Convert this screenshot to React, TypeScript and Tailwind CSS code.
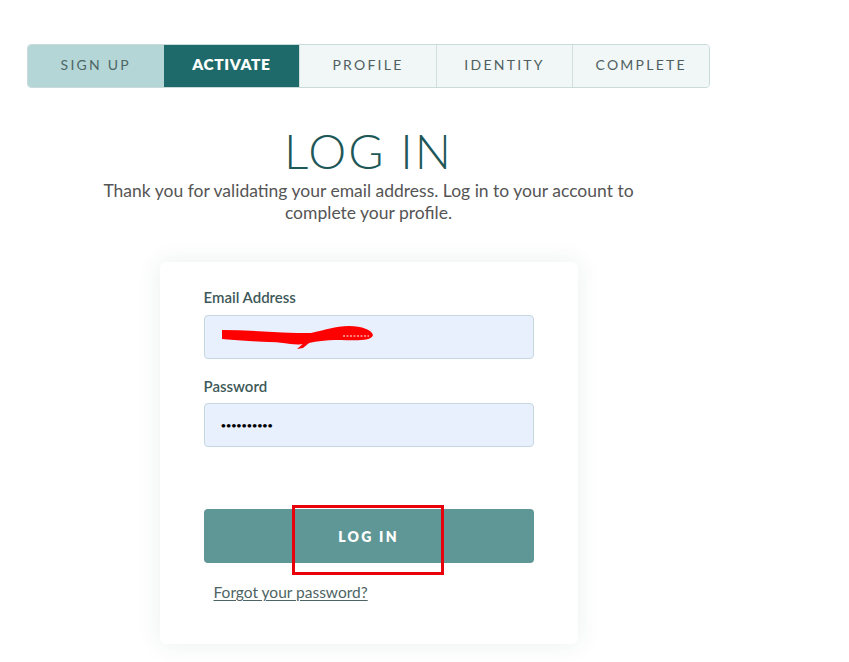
const steps = [
  { label: 'SIGN UP', state: 'done' },
  { label: 'ACTIVATE', state: 'active' },
  { label: 'PROFILE', state: 'todo' },
  { label: 'IDENTITY', state: 'todo' },
  { label: 'COMPLETE', state: 'todo' },
];

const App = () => {
  return (
    <div className="min-h-[662px] bg-white font-['Lato','Liberation_Sans',sans-serif]">
      <div className="ml-[27px] flex w-[683px] flex-col items-center pt-[44px]">
        {/* Stepper */}
        <div className="flex h-[44px] w-full overflow-hidden rounded-[4px] border border-[#c9dada]">
          {steps.map((step, i) => {
            let cls = 'bg-[#f1f6f7] text-[#4f5f60] tracking-[0.16em] font-normal text-[14px]';
            if (step.state === 'done') cls = 'bg-[#b5d6d6] text-[#4d6666] tracking-[0.16em] font-normal text-[14px]';
            if (step.state === 'active') cls = 'bg-[#1e6a6a] text-white tracking-[0.04em] font-extrabold text-[15.5px]';
            return (
              <div
                key={step.label}
                className={`flex flex-1 items-center justify-center pb-[3px] ${cls} ${
                  i > 1 ? 'border-l border-[#d3dede]' : ''
                }`}
              >
                {step.label}
              </div>
            );
          })}
        </div>

        {/* Heading */}
        <h1 className="mt-[38px] text-[48px] font-light leading-[50px] tracking-[0.04em] text-[#1e5757]">
          LOG IN
        </h1>
        <p className="mt-[4px] w-[580px] text-center text-[17.5px] leading-[22px] text-[#555]">
          Thank you for validating your email address. Log in to your account to complete your profile.
        </p>

        {/* Card */}
        <div className="mt-[38px] w-[418px] rounded-[6px] bg-white px-[44px] pb-[40px] pt-[24px] shadow-[0_0_24px_rgba(30,70,70,0.09)]">
          <label className="block text-[15px] font-semibold text-[#3e5959]">Email Address</label>
          <div className="mt-[6px] flex h-[44px] items-center rounded-[4px] border border-[#c6d7e0] bg-[#e8f0fe] px-[16px]">
            <svg width="154" height="26" viewBox="0 0 154 26">
              <path
                d="M1 6 C30 6 60 9 90 9 C104 6 114 2 128 2 C141 2 151 6 152 11 C151 16 140 17 120 16 C102 16 92 18 84 20 C74 21 70 20 62 19 C52 18 40 18 28 17 C18 16 8 16 1 15 Z"
                fill="#f00"
              />
              <path d="M84 18 L76 25 L82 24 L88 19 Z" fill="#f00" />
              <path d="M122 12 H148" stroke="#fff" strokeWidth="1" strokeDasharray="2 1.5" />
            </svg>
          </div>

          <label className="mt-[16px] block text-[15px] font-semibold text-[#3e5959]">Password</label>
          <div className="mt-[6px] flex h-[44px] items-center rounded-[4px] border border-[#c6d7e0] bg-[#e8f0fe] px-[16px] text-[10px] tracking-[-0.6px] text-black">
            ••••••••••
          </div>

          {/* Submit */}
          <div className="relative mt-[62px]">
            <button className="flex h-[54px] w-full items-center justify-center rounded-[4px] bg-[#5f9696] text-[14px] font-extrabold tracking-[0.16em] text-white">
              LOG IN
            </button>
            <div className="pointer-events-none absolute left-[88px] top-[-4px] h-[70px] w-[152px] border-[3px] border-[#e8000a]" />
          </div>

          <a className="ml-[10px] mt-[18px] block text-[15.5px] text-[#4e6464] underline underline-offset-2">
            Forgot your password?
          </a>
        </div>
      </div>
    </div>
  );
};

export default App;
